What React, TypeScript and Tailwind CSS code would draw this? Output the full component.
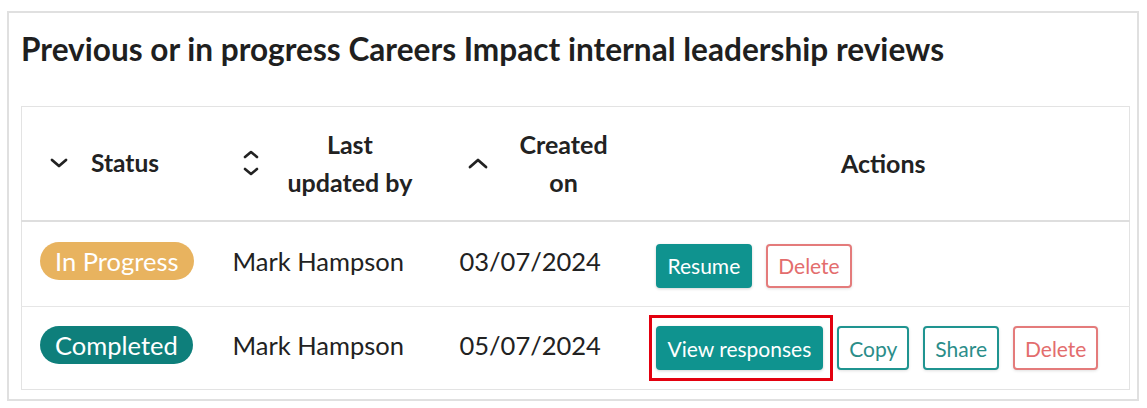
import React from "react";

const ChevronDown = () => (
  <svg width="18" height="10" viewBox="0 0 18 10" className="block">
    <path d="M2 2 L9 8 L16 2" fill="none" stroke="#222" strokeWidth="2.8" strokeLinecap="round" strokeLinejoin="round" />
  </svg>
);

const ChevronUp = () => (
  <svg width="20" height="12" viewBox="0 0 20 12" className="block">
    <path d="M2 10 L10 3 L18 10" fill="none" stroke="#222" strokeWidth="2.8" strokeLinecap="round" strokeLinejoin="round" />
  </svg>
);

const UpDown = () => (
  <svg width="16" height="26" viewBox="0 0 16 26" className="block">
    <path d="M2 7 L8 2 L14 7" fill="none" stroke="#222" strokeWidth="2.6" strokeLinecap="round" strokeLinejoin="round" />
    <path d="M2 19 L8 24 L14 19" fill="none" stroke="#222" strokeWidth="2.6" strokeLinecap="round" strokeLinejoin="round" />
  </svg>
);

const Solid = ({ children }: { children: React.ReactNode }) => (
  <button className="h-[44px] px-[10px] rounded-[4px] bg-[#0f938f] border-2 border-[#0f938f] text-white text-[21px] leading-none shadow-[0_1px_3px_rgba(0,0,0,0.18)]">
    {children}
  </button>
);

const Outline = ({ children, red }: { children: React.ReactNode; red?: boolean }) => (
  <button
    className={
      red
        ? "h-[44px] px-[10px] rounded-[4px] bg-white border-2 border-[#e47b7b] text-[#e36d6d] text-[21px] leading-none shadow-[0_1px_3px_rgba(0,0,0,0.12)]"
        : "h-[44px] px-[10px] rounded-[4px] bg-white border-2 border-[#1f9490] text-[#2a8d89] text-[21px] leading-none shadow-[0_1px_3px_rgba(0,0,0,0.12)]"
    }
  >
    {children}
  </button>
);

export default function App() {
  return (
    <div
      className="bg-white w-[1147px] h-[408px] pt-[11px] pl-[7px] text-[#222]"
      style={{ fontFamily: "Lato, 'Noto Sans', sans-serif" }}
    >
      <div className="w-[1132px] h-[390px] border-2 border-[#e0e0e0] pl-[12px]">
        <h2 className="text-[31.6px] font-bold leading-[38px] pt-[17px] text-[#1f1f1f] whitespace-nowrap">
          Previous or in progress Careers Impact internal leadership reviews
        </h2>
        <table className="mt-[38px] w-[1108px] border-collapse border border-[#e3e3e3] table-fixed">
          <colgroup>
            <col className="w-[192px]" />
            <col className="w-[227px]" />
            <col className="w-[197px]" />
            <col className="w-[492px]" />
          </colgroup>
          <thead>
            <tr className="h-[114px] border-b-2 border-[#dedede]">
              <th className="p-0 font-bold text-[24.5px] leading-[38px]">
                <div className="flex items-center pl-[28px]">
                  <ChevronDown />
                  <span className="ml-[23px]">Status</span>
                </div>
              </th>
              <th className="p-0 font-bold text-[25px] leading-[38px]">
                <div className="flex items-center pl-[29px]">
                  <UpDown />
                  <span className="ml-[29px] text-center whitespace-nowrap">
                    Last
                    <br />
                    updated by
                  </span>
                </div>
              </th>
              <th className="p-0 font-bold text-[25px] leading-[38px]">
                <div className="flex items-center pl-[27px]">
                  <ChevronUp />
                  <span className="ml-[32px] text-center">
                    Created
                    <br />
                    on
                  </span>
                </div>
              </th>
              <th className="p-0 font-bold text-[25px] leading-[38px] text-center">Actions</th>
            </tr>
          </thead>
          <tbody className="text-[25.5px]">
            <tr className="h-[86px] border-b border-[#e6e6e6]">
              <td className="p-0 pl-[18px] pb-[6px]">
                <span className="inline-flex items-center h-[38px] px-[15px] rounded-full bg-[#e8b35f] text-white">
                  In Progress
                </span>
              </td>
              <td className="p-0 pl-[19px] pb-[6px]">Mark Hampson</td>
              <td className="p-0 pl-[19px] pb-[6px]">03/07/2024</td>
              <td className="p-0 pl-[18px]">
                <div className="flex items-center gap-[14px] pt-[4px]">
                  <Solid>Resume</Solid>
                  <Outline red>Delete</Outline>
                </div>
              </td>
            </tr>
            <tr className="h-[83px]">
              <td className="p-0 pl-[18px] pb-[6px]">
                <span className="inline-flex items-center h-[38px] px-[15px] rounded-full bg-[#0e7f7b] text-white">
                  Completed
                </span>
              </td>
              <td className="p-0 pl-[19px] pb-[6px]">Mark Hampson</td>
              <td className="p-0 pl-[19px] pb-[6px]">05/07/2024</td>
              <td className="p-0 pl-[18px]">
                <div className="flex items-center gap-[14px]">
                  <div className="relative">
                    <Solid>View responses</Solid>
                    <div className="absolute left-[-7px] right-[-10px] top-[-11px] bottom-[-11px] border-[3px] border-[#e3000f] pointer-events-none" />
                  </div>
                  <Outline>Copy</Outline>
                  <Outline>Share</Outline>
                  <Outline red>Delete</Outline>
                </div>
              </td>
            </tr>
          </tbody>
        </table>
      </div>
    </div>
  );
}
